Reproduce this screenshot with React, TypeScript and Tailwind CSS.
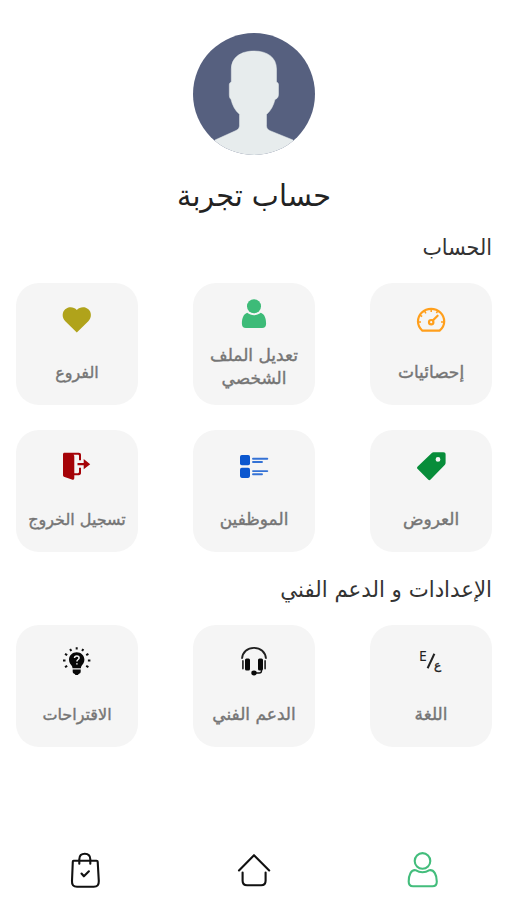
import type { ReactNode } from "react";

const font = "font-['DejaVu_Sans','Noto_Sans',sans-serif]";

function Icon({ children }: { children: ReactNode }) {
  return (
    <svg className="size-9 shrink-0" viewBox="0 0 36 36" fill="none">
      {children}
    </svg>
  );
}

function Gauge() {
  return (
    <Icon>
      <path d="M9.4 28.7h17.2c3-2.6 4.6-5.5 4.6-9.2a13.1 12.7 0 0 0-26.2 0c0 3.7 1.5 6.6 4.4 9.2Z" stroke="#ff9f1c" strokeWidth="2.2" strokeLinejoin="round" />
      <path d="M18.2 7v3M11.5 8.8l1.4 2.5M6.8 13.2l2.4 1.3M5 20h3M24.8 8.8l-1.4 2.3M28 20h3" stroke="#ff9f1c" strokeWidth="1.5" />
      <path d="M19.8 18.5l4.8-4.8" stroke="#ff9f1c" strokeWidth="2.2" strokeLinecap="round" />
      <circle cx="18.2" cy="20.2" r="2.2" stroke="#ff9f1c" strokeWidth="2.2" />
    </Icon>
  );
}

function Person() {
  return (
    <Icon>
      <circle cx="18" cy="10.3" r="7" fill="#3dbb78" />
      <path d="M11.2 16.8c4 3.2 9.6 3.2 13.6 0 3.7 1.4 5.3 5.4 5.3 11 0 2.8-1.4 4.2-4 4.2H10c-2.7 0-4.1-1.4-4.1-4.2 0-5.6 1.6-9.6 5.3-11Z" fill="#3dbb78" />
    </Icon>
  );
}

function Heart() {
  return (
    <Icon>
      <path d="M17.8 30.6 6.3 19.3C2.8 15.8 2.9 10.2 6.2 7.3c3.4-3 8.8-2.6 11.6.8 2.9-3.4 8.2-3.8 11.6-.8 3.3 2.9 3.4 8.5-.1 12Z" fill="#b0a31b" />
    </Icon>
  );
}

function Tag() {
  return (
    <Icon>
      <path fillRule="evenodd" d="M20.5 3.2h9.8c1.6 0 2.3.8 2.3 2.3v8.2c0 .9-.3 1.5-.9 2.2L17.6 30.6c-.8.9-1.6.9-2.5 0L4.7 20.1c-.9-.9-.9-1.7 0-2.6L18.8 3.9c.5-.5 1-.7 1.7-.7ZM25 8a2.4 2.4 0 1 0 0 4.8A2.4 2.4 0 0 0 25 8Z" fill="#078d3a" />
    </Icon>
  );
}

function Staff() {
  return (
    <Icon>
      <rect x="4" y="6" width="10" height="10.2" rx="1.8" fill="#0b57cf" />
      <rect x="4" y="18.7" width="10" height="10.2" rx="1.8" fill="#0b57cf" />
      <path d="M17 9.7h14.3M17 13h9M17 22.1h14.3M17 25.3h9" stroke="#3472d5" strokeWidth="1.9" strokeLinecap="round" />
    </Icon>
  );
}

function Logout() {
  return (
    <Icon>
      <path d="M5.5 3.8h14.3c1.4 0 2.2.8 2.2 2.2v5.2h-2V7c0-.8-.4-1.2-1.2-1.2h-4.3c.6.5.8 1.1.8 2v16.4h3.5c.8 0 1.2-.4 1.2-1.2v-4.2h2v5.2c0 1.4-.8 2.2-2.2 2.2h-4.5V29c0 1.5-1 2.1-2.4 1.6l-7.3-2.5C4.5 27.7 4 27 4 26V5.3c0-.9.6-1.5 1.5-1.5Z" fill="#a50308" />
      <path d="M18.5 14.1h6.2v-4l6.5 5.1-6.5 5.1v-4h-6.2Z" fill="#a50308" />
    </Icon>
  );
}

function Language() {
  return (
    <span dir="ltr" className="relative block size-9 shrink-0 text-[#222]">
      <span className="absolute left-[6px] top-[4px] text-[14px] leading-[15px] font-['Noto_Sans',sans-serif]">E</span>
      <span className="absolute left-[17px] top-[9px] h-[16px] w-[2px] rotate-[25deg] bg-[#222]" />
      <span className="absolute left-[21px] top-[14px] text-[12px] leading-[15px] [-webkit-text-stroke:0.4px_#222]">ع</span>
    </span>
  );
}

function Headset() {
  return (
    <Icon>
      <path d="M6 14.8C6.5 8 11.5 3.9 18 3.9S29.5 8 30 14.8" stroke="#202020" strokeWidth="1.9" />
      <rect x="9" y="14.5" width="5" height="12" rx="1.5" fill="#080808" />
      <rect x="22" y="14.5" width="5" height="12" rx="1.5" fill="#080808" />
      <path d="M6.9 17v7.5M29.1 17v7.5" stroke="#333" strokeWidth="1.8" strokeLinecap="round" />
      <path d="M25.5 26v.7c0 1.5-.8 2.3-2.3 2.3H18" stroke="#111" strokeWidth="1.4" />
      <ellipse cx="18" cy="29" rx="2.7" ry="2.4" fill="#080808" />
    </Icon>
  );
}

function Idea() {
  return (
    <Icon>
      <path d="M17.7 8.2c-4.4 0-7.7 3.3-7.7 7.5 0 3.2 1.8 4.6 2.9 6.3.4.7.5 1.3.6 2.2h8.4c.1-.9.2-1.5.6-2.2 1.1-1.7 2.9-3.1 2.9-6.3 0-4.2-3.3-7.5-7.7-7.5ZM13.7 25.5h8v2.3c0 1.2-.9 1.9-2 2.1-.4.8-1.1 1.2-2 1.2s-1.6-.4-2-1.2c-1.1-.2-2-.9-2-2.1Z" fill="#080808" />
      <path d="M15.5 14c.1-1.3 1-2.1 2.3-2.1s2.3.8 2.3 2c0 1.6-2.2 1.6-2.2 3.5M17.9 19.3v1.3" stroke="#f5f5f5" strokeWidth="1.5" />
      <path d="M17.7 3.2v2.4M11.1 4.9l1.2 2.1M24.3 4.9l-1.2 2.1M6 9.8l2.2 1.3M29.4 9.8l-2.2 1.3M4 16.5h2.5M31.4 16.5h-2.5M6 23.2l2.2-1.3M29.4 23.2l-2.2-1.3" stroke="#111" strokeWidth="2" />
    </Icon>
  );
}

interface Item {
  lines: string[];
  icon: ReactNode;
  narrow?: boolean;
}

const account: Item[] = [
  { lines: ["إحصائيات"], icon: <Gauge /> },
  { lines: ["تعديل الملف", "الشخصي"], icon: <Person /> },
  { lines: ["الفروع"], icon: <Heart />, narrow: true },
  { lines: ["العروض"], icon: <Tag /> },
  { lines: ["الموظفين"], icon: <Staff /> },
  { lines: ["تسجيل الخروج"], icon: <Logout />, narrow: true },
];

const support: Item[] = [
  { lines: ["اللغة"], icon: <Language /> },
  { lines: ["الدعم الفني"], icon: <Headset /> },
  { lines: ["الاقتراحات"], icon: <Idea />, narrow: true },
];

function Cards({ items }: { items: Item[] }) {
  return (
    <div className="grid grid-cols-[122px_122px_122px] justify-between gap-y-[25px]">
      {items.map((item) => (
        <button
          key={item.lines[0]}
          className={`flex h-[122px] flex-col items-center rounded-[23px] bg-[#f5f5f5] ${item.lines.length > 1 ? "gap-[12px] pt-[13px]" : "gap-[23px] pt-[19px]"}`}
        >
          {item.icon}
          <span
            className={`flex flex-col items-center whitespace-nowrap leading-[23px] text-[#757575] [-webkit-text-stroke:0.4px_#757575] ${item.narrow ? "text-[16px]" : "text-[17px]"}`}
          >
            {item.lines.map((line) => (
              <span key={line}>{line}</span>
            ))}
          </span>
        </button>
      ))}
    </div>
  );
}

export default function App() {
  return (
    <div dir="rtl" className={`flex h-[900px] w-[507px] flex-col overflow-hidden bg-white ${font}`}>
      <main className="flex flex-1 flex-col pl-4 pr-[15px] pt-[33px]">
        <svg className="size-[122px] self-center" viewBox="0 0 122 122">
          <circle cx="61" cy="61" r="61" fill="#56607f" />
          <clipPath id="avatar"><circle cx="61" cy="61" r="61" /></clipPath>
          <path clipPath="url(#avatar)" d="M61 18c13.5 0 22.5 6.5 22.5 18v13c1.5.5 2 1.5 2 3v9c0 3-1 4.5-3.5 5.500-1.500 6-4 11-8.500 15v11c0 2.500 1 4 3.500 5.200L100 107v15H22v-15l21-9.500c2.500-1.200 3.500-2.700 3.500-5.200v-11C42 77.500 39.500 72.500 38 66.500c-1.500-1.500-1.700-3-1.700-5.500v-9c0-1.500.5-2.500 2-3V36C38.300 24.500 47.500 18 61 18Z" fill="#e7eced" stroke="#e7eced" strokeWidth="0.500" />
        </svg>
        <h1 className="mt-[17px] h-[48px] scale-x-[0.957] text-center text-[30px] leading-[48px] text-[#222]">حساب تجربة</h1>
        <h2 className="mt-[12px] h-[32px] origin-right scale-x-[0.94] text-[22px] leading-[32px] text-[#333]">الحساب</h2>
        <div className="mt-[19px]"><Cards items={account} /></div>
        <h2 className="mt-[22px] h-[32px] origin-right scale-x-[0.968] text-[22px] leading-[32px] text-[#333]">الإعدادات و الدعم الفني</h2>
        <div className="mt-[19px]"><Cards items={support} /></div>
      </main>
      <nav className="grid h-[60px] grid-cols-3 justify-items-center pt-[10px]">
        <svg className="size-10" viewBox="0 0 40 40" fill="none" stroke="#43bd7c" strokeWidth="2.1">
          <circle cx="19.5" cy="10.9" r="7.8" />
          <path d="M12.5 20.2c4.3 2.5 9.7 2.5 14 0 4.5-.5 7.3 4.6 7.3 11.3 0 3.3-1.5 4.8-4.3 4.8H10c-3 0-4.3-1.5-4.3-4.8 0-6.7 2.3-11.8 6.8-11.3Z" strokeLinejoin="round" />
        </svg>
        <svg className="size-10" viewBox="0 0 40 40" fill="none" stroke="#111" strokeWidth="2.1" strokeLinecap="round" strokeLinejoin="round">
          <path d="M5 20.500 20 5.200l15.200 15.300M8.600 22.500v8.200c0 3 1.500 4.500 4.500 4.500h14c3 0 4.500-1.500 4.500-4.500v-8.200" />
        </svg>
        <svg className="size-10" viewBox="0 0 40 40" fill="none" stroke="#111" strokeWidth="2.1" strokeLinecap="round" strokeLinejoin="round">
          <path d="M8.5 10.7h23c.8 0 1.2.3 1.2 1.1L33.8 31c.1 4-1.4 5.7-5 5.7H12c-3.6 0-5.2-1.7-5-5.7l.8-19.2c0-.8.2-1.1.7-1.1ZM14.3 13.8V9.3c0-3.7 2.1-5.6 5.5-5.6s5.5 1.9 5.5 5.6v4.5M16.5 23.5l2.4 2.8 5-5" />
        </svg>
      </nav>
    </div>
  );
}
